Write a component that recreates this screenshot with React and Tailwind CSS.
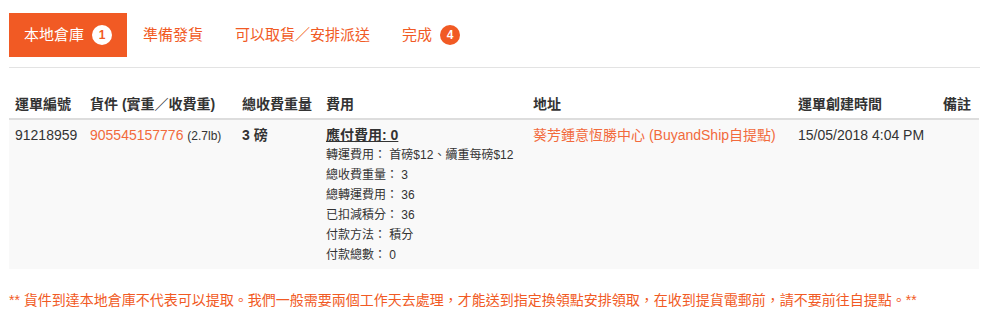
import React from "react";

const TABS = [
  { label: "本地倉庫", count: 1, active: true },
  { label: "準備發貨" },
  { label: "可以取貨／安排派送" },
  { label: "完成", count: 4 },
];

const FEES = [
  ["轉運費用", "首磅$12、續重每磅$12"],
  ["總收費重量", "3"],
  ["總轉運費用", "36"],
  ["已扣減積分", "36"],
  ["付款方法", "積分"],
  ["付款總數", "0"],
];

export default function App() {
  return (
    <div
      className="w-[989px] h-[322px] bg-white text-[#333] px-[9px] pt-[13px]"
      style={{ fontFamily: '"Liberation Sans", "Noto Sans CJK TC", sans-serif' }}
    >
      {/* Tabs */}
      <div className="flex h-[44px]">
        {TABS.map((t) => (
          <div
            key={t.label}
            className={
              t.active
                ? "flex items-center px-[15px] bg-[#f15a24] text-white text-[15px]"
                : "flex items-center px-[16px] text-[#f15a24] text-[15px]"
            }
          >
            <span>{t.label}</span>
            {t.count && (
              <span
                className={
                  t.active
                    ? "ml-[8px] w-[20px] h-[20px] rounded-full bg-white text-[#f15a24] text-[12px] font-bold flex items-center justify-center"
                    : "ml-[8px] w-[20px] h-[20px] rounded-full bg-[#f15a24] text-white text-[12px] font-bold flex items-center justify-center"
                }
              >
                {t.count}
              </span>
            )}
          </div>
        ))}
      </div>
      <div className="mt-[10px] h-px bg-[#e3e3e3]" />

      {/* Table */}
      <table className="mt-[18px] w-[970px] table-fixed border-collapse text-[14px]">
        <colgroup>
          <col className="w-[75px]" />
          <col className="w-[152px]" />
          <col className="w-[84px]" />
          <col className="w-[207px]" />
          <col className="w-[265px]" />
          <col className="w-[145px]" />
          <col />
        </colgroup>
        <thead>
          <tr className="border-b-2 border-[#ddd]">
            {["運單編號", "貨件 (實重／收費重)", "總收費重量", "費用", "地址", "運單創建時間", "備註"].map((h) => (
              <th key={h} className="text-left font-bold px-[6px] pt-[8px] pb-[4px] leading-[20px] whitespace-nowrap">
                {h}
              </th>
            ))}
          </tr>
        </thead>
        <tbody>
          <tr className="bg-[#f9f9f9] align-top">
            <td className="px-[6px] pt-[5px] leading-[20px]">91218959</td>
            <td className="px-[6px] pt-[5px] leading-[20px] whitespace-nowrap">
              <span className="text-[#f26a3c]">905545157776</span>{" "}
              <span className="text-[12px]">(2.7lb)</span>
            </td>
            <td className="px-[6px] pt-[5px] leading-[20px] font-bold">3 磅</td>
            <td className="px-[6px] pt-[5px] pb-[4px]">
              <div className="font-bold underline leading-[20px]">應付費用: 0</div>
              <div className="text-[12px] leading-[20px] whitespace-nowrap">
                {FEES.map(([k, v]) => (
                  <div key={k}>
                    {k}： {v}
                  </div>
                ))}
              </div>
            </td>
            <td className="px-[6px] pt-[5px] leading-[20px] text-[#f26a3c] whitespace-nowrap">
              葵芳鍾意恆勝中心 (BuyandShip自提點)
            </td>
            <td className="px-[6px] pt-[5px] leading-[20px] whitespace-nowrap">15/05/2018 4:04 PM</td>
            <td className="px-[6px] pt-[5px]"></td>
          </tr>
        </tbody>
      </table>

      <p className="mt-[23px] text-[14px] text-[#f15a24] leading-[16px] whitespace-nowrap">
        ** 貨件到達本地倉庫不代表可以提取。我們一般需要兩個工作天去處理，才能送到指定換領點安排領取，在收到提貨電郵前，請不要前往自提點。**
      </p>
    </div>
  );
}
